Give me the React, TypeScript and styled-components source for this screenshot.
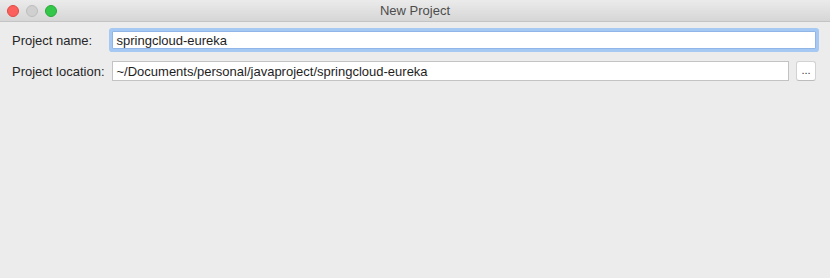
import React from 'react'
import styled, { createGlobalStyle } from 'styled-components'

const Global = createGlobalStyle`
	html, body {
		margin: 0;
		padding: 0;
		background: #ececec;
	}
	body {
		font-family: 'Liberation Sans', 'Helvetica Neue', Arial, sans-serif;
		font-size: 13px;
		color: #222;
	}
`

const Window = styled.div`
	width: 830px;
	height: 278px;
	background: #ececec;
	display: flex;
	flex-direction: column;
	overflow: hidden;
`

const TitleBar = styled.div`
	height: 21px;
	border-bottom: 1px solid #c4c4c4;
	background: linear-gradient(#ebebeb, #d6d6d6);
	display: grid;
	grid-template-columns: 80px 1fr 80px;
	align-items: center;
`

const Lights = styled.div`
	display: flex;
	gap: 7px;
	padding-left: 7px;
`

const Light = styled.span<{ $fill: string; $edge: string }>`
	width: 12px;
	height: 12px;
	border-radius: 50%;
	box-sizing: border-box;
	background: ${({ $fill }) => $fill};
	border: 0.5px solid ${({ $edge }) => $edge};
`

const Title = styled.div`
	text-align: center;
	color: #4c4c4c;
	font-size: 13px;
`

const Form = styled.div`
	display: grid;
	grid-template-columns: auto 1fr 20px;
	column-gap: 7px;
	row-gap: 9px;
	align-items: center;
	padding: 6px 14px 0 12px;
`

const Label = styled.label`
	font-size: 13px;
	color: #262626;
	white-space: nowrap;
`

const Field = styled.div<{ $focused?: boolean; $wide?: boolean }>`
	grid-column: ${({ $wide }) => ($wide ? '2 / 4' : '2 / 3')};
	height: ${({ $focused }) => ($focused ? '18px' : '20px')};
	margin: ${({ $focused }) => ($focused ? '3px 0 3px 0' : '0')};
	box-sizing: border-box;
	background: #fff;
	border: 1px solid ${({ $focused }) => ($focused ? '#8fb6e6' : '#c3c3c3')};
	box-shadow: ${({ $focused }) => ($focused ? '0 0 0 3px #a5c9f3' : 'none')};
	border-radius: ${({ $focused }) => ($focused ? '1px' : '0')};
	display: flex;
	align-items: center;
	padding-left: 4px;
	font-size: 13px;
	color: #1e1e1e;
	white-space: nowrap;
	overflow: hidden;
`

const Browse = styled.button`
	width: 20px;
	height: 20px;
	padding: 0 0 4px;
	box-sizing: border-box;
	background: #fff;
	border: 1px solid #d2d2d2;
	border-bottom-color: #bcbcbc;
	border-radius: 3px;
	font-family: inherit;
	font-size: 11px;
	color: #333;
	line-height: 1;
	display: flex;
	align-items: flex-end;
	justify-content: center;
`

export default function App() {
	return <Window>
		<Global/>
		<TitleBar>
			<Lights>
				<Light $fill="#fc605c" $edge="#de4a45"/>
				<Light $fill="#d0d0d0" $edge="#bdbdbd"/>
				<Light $fill="#34c84a" $edge="#2aa83a"/>
			</Lights>
			<Title>New Project</Title>
		</TitleBar>
		<Form>
			<Label>Project name:</Label>
			<Field $focused $wide>springcloud-eureka</Field>
			<Label>Project location:</Label>
			<Field>~/Documents/personal/javaproject/springcloud-eureka</Field>
			<Browse>...</Browse>
		</Form>
	</Window>
}
